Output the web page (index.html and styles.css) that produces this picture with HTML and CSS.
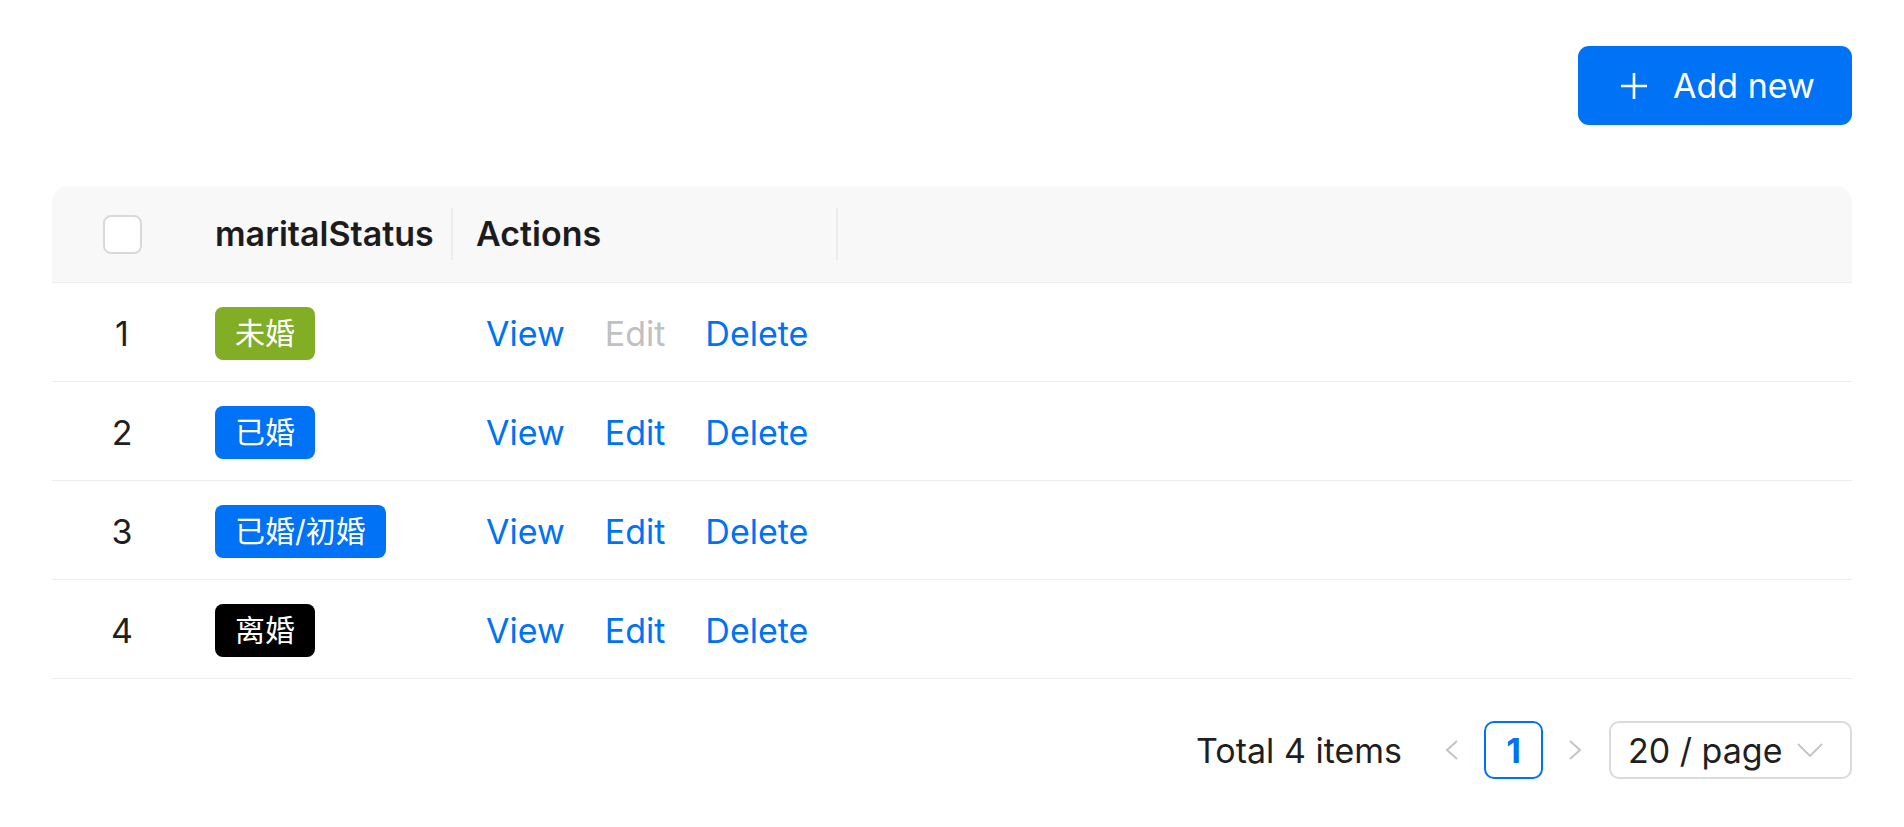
FILE: index.html
```html
<!DOCTYPE html>
<html lang="en">
<head>
<meta charset="utf-8">
<title>Marital status</title>
<link rel="stylesheet" href="styles.css">
</head>
<body>
<div class="page">
  <div class="toolbar">
    <button class="btn-primary" type="button">
      <svg class="plus" viewBox="0 0 28 28" width="28" height="28"><path d="M14 1v26M1 14h26" stroke="#fff" stroke-width="2.6" fill="none"/></svg>
      <span>Add new</span>
    </button>
  </div>

  <div class="table">
    <div class="row head">
      <div class="cell center"><span class="checkbox"></span></div>
      <div class="cell sep">maritalStatus</div>
      <div class="cell sep">Actions</div>
      <div class="cell"></div>
    </div>
    <div class="row">
      <div class="cell center num">1</div>
      <div class="cell"><span class="tag green">未婚</span></div>
      <div class="cell links"><a class="link">View</a><a class="link disabled">Edit</a><a class="link">Delete</a></div>
      <div class="cell"></div>
    </div>
    <div class="row">
      <div class="cell center num">2</div>
      <div class="cell"><span class="tag blue">已婚</span></div>
      <div class="cell links"><a class="link">View</a><a class="link">Edit</a><a class="link">Delete</a></div>
      <div class="cell"></div>
    </div>
    <div class="row">
      <div class="cell center num">3</div>
      <div class="cell"><span class="tag blue">已婚/初婚</span></div>
      <div class="cell links"><a class="link">View</a><a class="link">Edit</a><a class="link">Delete</a></div>
      <div class="cell"></div>
    </div>
    <div class="row">
      <div class="cell center num">4</div>
      <div class="cell"><span class="tag black">离婚</span></div>
      <div class="cell links"><a class="link">View</a><a class="link">Edit</a><a class="link">Delete</a></div>
      <div class="cell"></div>
    </div>
  </div>

  <div class="pagination">
    <span class="total">Total 4 items</span>
    <span class="arrow prev"><svg viewBox="0 0 16 22" width="16" height="22"><path d="M13 2L3 11l10 9" stroke="#c4c4c4" stroke-width="2" fill="none"/></svg></span>
    <span class="page-item">1</span>
    <span class="arrow next"><svg viewBox="0 0 16 22" width="16" height="22"><path d="M3 2l10 9-10 9" stroke="#c4c4c4" stroke-width="2" fill="none"/></svg></span>
    <span class="select">
      <span>20 / page</span>
      <svg class="chev" viewBox="0 0 26 14" width="26" height="14"><path d="M1 1l12 12L25 1" stroke="#c4c4c4" stroke-width="1.8" fill="none"/></svg>
    </span>
  </div>
</div>
</body>
</html>
```

FILE: styles.css
```css
* { box-sizing: border-box; }
html, body { margin: 0; background: #fff; }
body {
  font-family: Inter, "Noto Sans", "Noto Sans CJK SC", sans-serif;
  color: #1f1f1f;
  font-size: 34px;
}
.page {
  padding: 46px 52px 0 52px;
}
.toolbar {
  display: flex;
  justify-content: flex-end;
}
.btn-primary {
  display: flex;
  align-items: center;
  gap: 25px;
  height: 79px;
  width: 274px;
  padding: 0 0 0 42px;
  border: none;
  border-radius: 11px;
  background: #0072f5;
  color: #fff;
  font-family: Inter, "Noto Sans", sans-serif;
  font-size: 34px;
  font-weight: 400;
  cursor: pointer;
}
.plus { display: block; }

.table {
  margin-top: 61px;
}
.row {
  display: grid;
  grid-template-columns: 140px 261px 385px 1fr;
  height: 99px;
  align-items: center;
  border-bottom: 1px solid #ededed;
}
.row.head {
  height: 97px;
  background: #f8f8f8;
  border-radius: 16px 16px 0 0;
  font-weight: 600;
  color: #1c1c1c;
}
.cell {
  position: relative;
  padding: 0 23px;
  line-height: 52px;
  white-space: nowrap;
}
.cell.center { text-align: center; padding: 0; }
.cell.num, .cell.links { padding-top: 3px; }
.cell.sep::after {
  content: "";
  position: absolute;
  right: 0;
  top: 0;
  height: 52px;
  width: 2px;
  background: #ececec;
}
.checkbox {
  display: inline-block;
  width: 39px;
  height: 39px;
  border: 2px solid #d9d9d9;
  border-radius: 8px;
  background: #fff;
  vertical-align: middle;
  margin-top: -4px;
}
.tag {
  display: inline-block;
  height: 53px;
  line-height: 53px;
  padding: 0 20px;
  border-radius: 8px;
  color: #fff;
  font-family: Inter, "Noto Sans CJK SC", sans-serif;
  font-size: 30px;
  vertical-align: middle;
}
.tag.green { background: #82ae26; }
.tag.blue { background: #0072f5; }
.tag.black { background: #000; }

.links { display: flex; gap: 20px; }
.link {
  padding: 0 10px;
  color: #0072f5;
  cursor: pointer;
}
.link.disabled { color: #c0c0c0; }

.pagination {
  display: flex;
  justify-content: flex-end;
  align-items: center;
  margin-top: 42px;
  height: 58px;
}
.total { margin-right: 30px; }
.arrow {
  display: flex;
  align-items: center;
  justify-content: center;
  width: 40px;
  height: 58px;
}
.prev { margin-right: 12px; }
.next { margin-left: 12px; margin-right: 14px; }
.page-item {
  width: 59px;
  height: 58px;
  border: 2px solid #0072f5;
  border-radius: 10px;
  color: #0072f5;
  font-weight: 700;
  display: flex;
  align-items: center;
  justify-content: center;
}
.select {
  width: 243px;
  height: 58px;
  border: 2px solid #dadada;
  border-radius: 10px;
  display: flex;
  align-items: center;
  justify-content: space-between;
  padding: 0 27px 0 17px;
}
.chev { display: block; }
```
